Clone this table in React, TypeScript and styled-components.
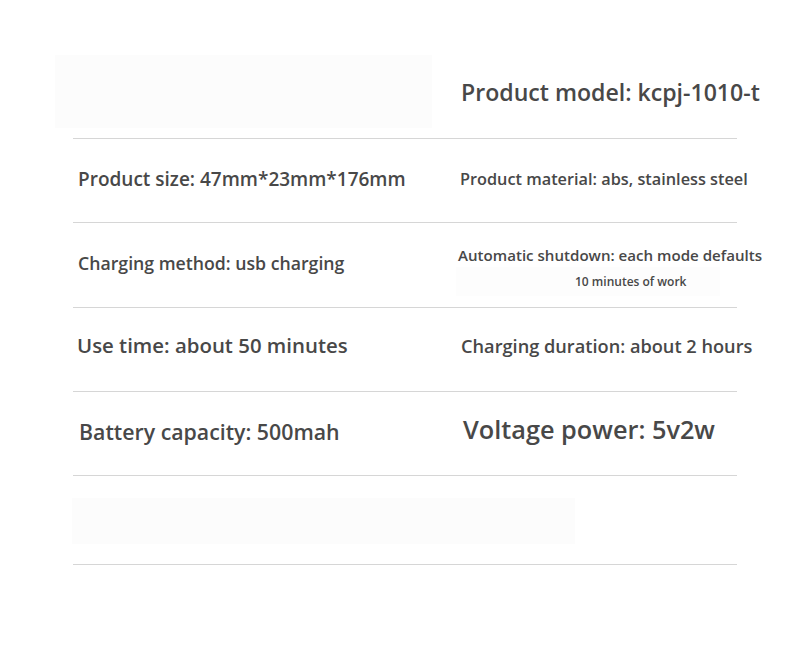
import React, { FC } from "react";
import styled, { createGlobalStyle } from "styled-components";

const GlobalStyle = createGlobalStyle`
  html, body {
    margin: 0;
    padding: 0;
    background: #ffffff;
  }
  body {
    font-family: "Open Sans", "Noto Sans", sans-serif;
    color: #484848;
  }
`;

interface Spec {
  text: string;
  size: number;
  shift?: number;
  dy?: number;
  sub?: string;
}

interface RowData {
  height: number;
  left?: Spec;
  right?: Spec;
  shadeLeft?: boolean;
}

const rows: RowData[] = [
  {
    height: 84,
    shadeLeft: true,
    right: { text: "Product model: kcpj-1010-t", size: 23.1, shift: 3, dy: -4 },
  },
  {
    height: 84,
    left: { text: "Product size: 47mm*23mm*176mm", size: 19, shift: 5, dy: -1.5 },
    right: { text: "Product material: abs, stainless steel", size: 16.3, shift: 2, dy: -1 },
  },
  {
    height: 85,
    left: { text: "Charging method: usb charging", size: 17.7, shift: 5, dy: -1 },
    right: {
      text: "Automatic shutdown: each mode defaults",
      size: 15.1,
      dy: 6,
      sub: "10 minutes of work",
    },
  },
  {
    height: 84,
    left: { text: "Use time: about 50 minutes", size: 20.4, shift: 4, dy: -4 },
    right: { text: "Charging duration: about 2 hours", size: 18.2, shift: 3, dy: -3 },
  },
  {
    height: 84,
    left: { text: "Battery capacity: 500mah", size: 21.3, shift: 6, dy: -2 },
    right: { text: "Voltage power: 5v2w", size: 25.3, shift: 5, dy: -4 },
  },
  { height: 89 },
];

const Page = styled.div`
  width: 790px;
  height: 670px;
  padding: 55px 0 0 73px;
  box-sizing: border-box;
`;

const Table = styled.div`
  width: 664px;
  display: flex;
  flex-direction: column;
`;

const Row = styled.div<{ $h: number }>`
  height: ${(p) => p.$h}px;
  display: grid;
  grid-template-columns: 385px 1fr;
  border-bottom: 1px solid #d6d6d6;
  box-sizing: border-box;
`;

const Cell = styled.div<{ $dy?: number }>`
  display: flex;
  flex-direction: column;
  justify-content: center;
  align-items: flex-start;
  padding-top: ${(p) => Math.max(0, (p.$dy ?? 0) * 2)}px;
  padding-bottom: ${(p) => Math.max(0, -(p.$dy ?? 0) * 2)}px;
`;

const Shade = styled.div`
  margin: 0 0 10px -18px;
  width: 377px;
  height: 73px;
  background: #fcfcfc;
`;

const BottomShade = styled.div`
  grid-column: 1 / span 2;
  align-self: center;
  width: 503px;
  height: 46px;
  margin-top: 2px;
  margin-left: -1px;
  background: #fcfcfc;
`;

const Label = styled.div<{ $size: number; $shift: number }>`
  font-size: ${(p) => p.$size}px;
  font-weight: 600;
  padding-left: ${(p) => p.$shift}px;
  line-height: 1.2;
  white-space: nowrap;
  color: #484848;
`;

const Sub = styled.div`
  width: 264px;
  margin-left: -2px;
  padding: 6px 0 6px 119px;
  box-sizing: border-box;
  font-size: 12px;
  font-weight: 600;
  margin-top: 3px;
  color: #484848;
  background: #fdfdfd;
`;

const Item: FC<{ spec?: Spec }> = ({ spec }) => {
  if (!spec) return <Cell />;
  return (
    <Cell $dy={spec.dy}>
      <Label $size={spec.size} $shift={spec.shift ?? 0}>
        {spec.text}
      </Label>
      {spec.sub && <Sub>{spec.sub}</Sub>}
    </Cell>
  );
};

const App: FC = () => (
  <Page>
    <GlobalStyle />
    <Table>
      {rows.map((r, i) => (
        <Row key={i} $h={r.height}>
          {r.shadeLeft ? (
            <Cell>
              <Shade />
            </Cell>
          ) : i === rows.length - 1 ? (
            <BottomShade />
          ) : (
            <Item spec={r.left} />
          )}
          {i !== rows.length - 1 && <Item spec={r.right} />}
        </Row>
      ))}
    </Table>
  </Page>
);

export default App;
